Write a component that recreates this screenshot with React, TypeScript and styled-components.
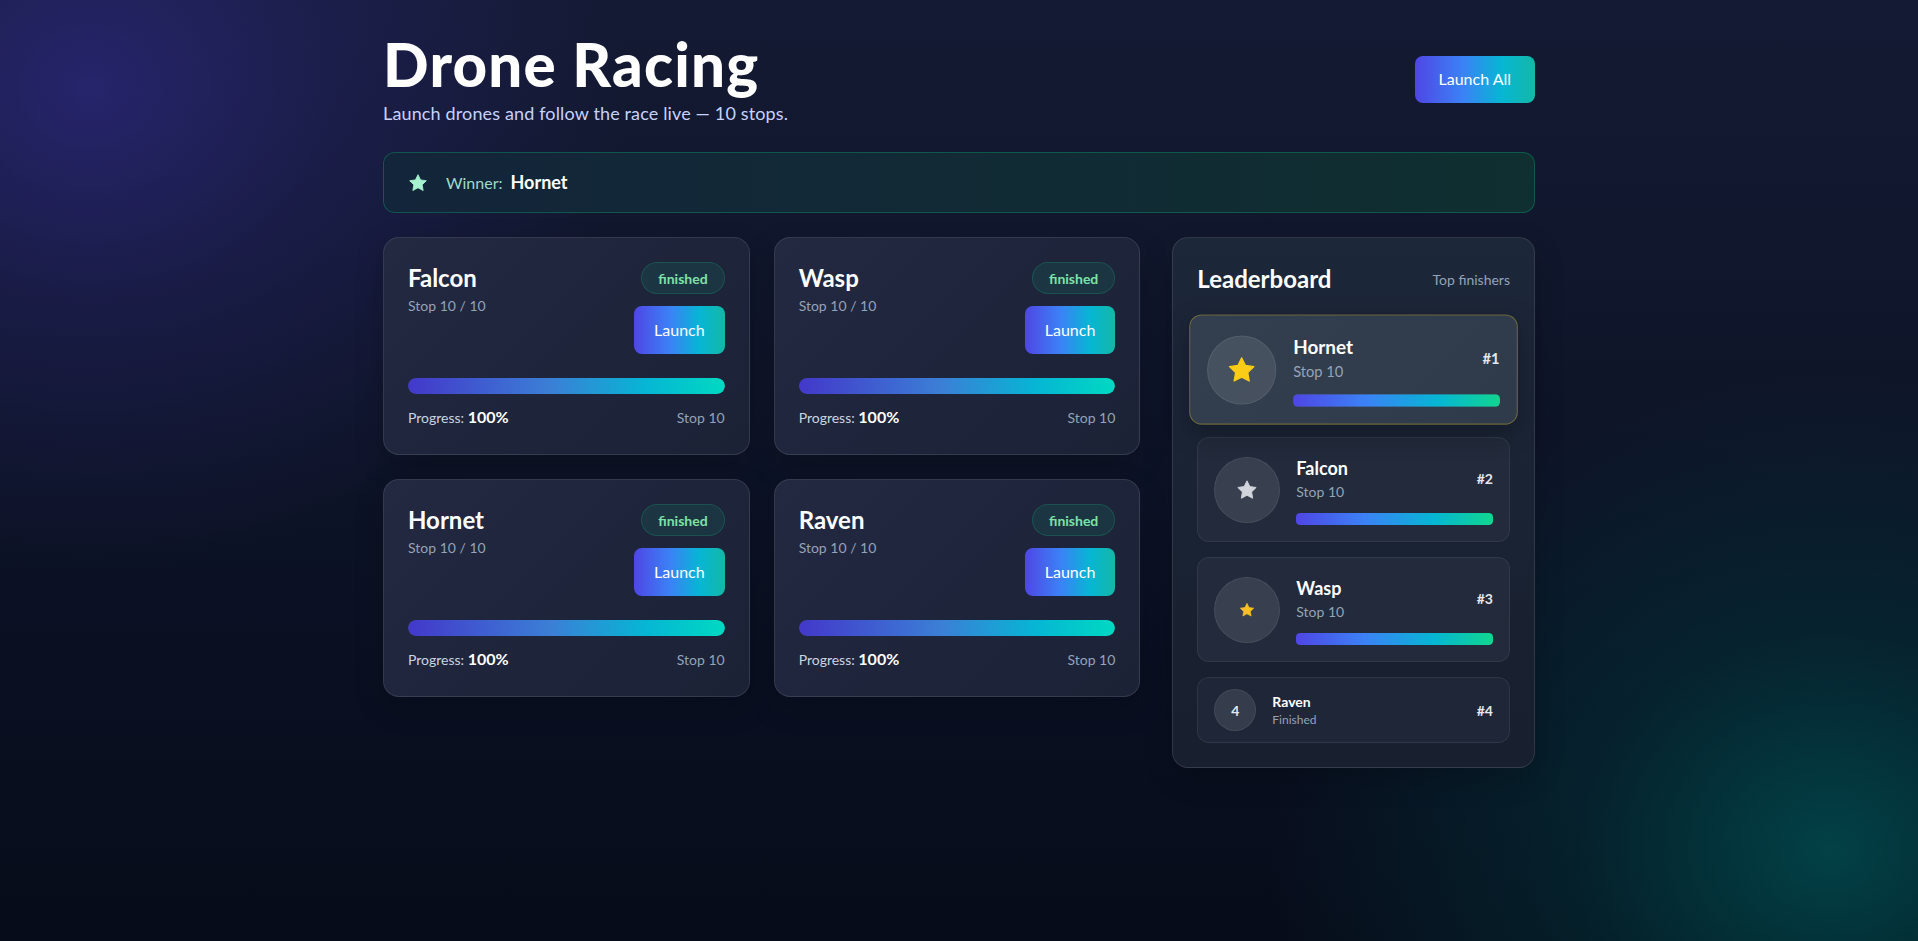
import React from "react";
import styled, { createGlobalStyle, css } from "styled-components";

const GlobalStyle = createGlobalStyle`
  * { box-sizing: border-box; }
  html, body { margin: 0; padding: 0; }
  body {
    min-height: 100vh;
    font-family: "Lato", "Noto Sans", "Liberation Sans", sans-serif;
    color: #f8fafc;
    background-color: #0a1022;
    background-image:
      radial-gradient(540px 480px at 90px 90px, rgba(52, 44, 150, 0.58) 0%, rgba(52, 44, 150, 0.24) 45%, rgba(52, 44, 150, 0) 100%),
      radial-gradient(560px 480px at 1830px 850px, rgba(0, 78, 80, 0.8) 0%, rgba(0, 64, 68, 0.38) 45%, rgba(0, 50, 60, 0) 100%),
      linear-gradient(180deg, #141a33 0%, #0f1529 40%, #0a1022 70%, #070c1a 100%);
    background-repeat: no-repeat;
  }
`;

const Page = styled.div`
  max-width: 1152px;
  margin: 0 auto;
  padding: 34px 0 40px;
`;

const Header = styled.header`
  display: flex;
  justify-content: space-between;
  align-items: center;
`;

const TitleBlock = styled.div`
  display: flex;
  flex-direction: column;
`;

const Title = styled.h1`
  margin: 0;
  font-size: 60px;
  line-height: 60px;
  font-weight: 900;
  letter-spacing: 0.02em;
  color: #ffffff;
`;

const Subtitle = styled.p`
  margin: 5px 0 0;
  font-size: 18px;
  line-height: 28px;
  letter-spacing: 0.008em;
  color: #c7d2fe;
`;

const GradientButton = styled.button<{ $size?: "md" | "lg" }>`
  border: none;
  cursor: pointer;
  font-family: inherit;
  color: #ffffff;
  font-size: 16px;
  line-height: 24px;
  border-radius: 8px;
  background: linear-gradient(90deg, #4f46e5 0%, #3b82f6 40%, #06b6d4 72%, #14b8a6 100%);
  ${(p) =>
    p.$size === "lg"
      ? css`
          padding: 11px 24px 12px;
          margin-top: -3px;
        `
      : css`
          padding: 12px 20px;
        `}
`;

const WinnerBanner = styled.div`
  margin-top: 25px;
  display: flex;
  align-items: center;
  gap: 18px;
  padding: 16px 24px;
  border-radius: 12px;
  border: 1px solid rgba(16, 185, 129, 0.32);
  background: linear-gradient(90deg, #13253a 0%, #112a35 50%, #0f2f30 100%);
`;

const WinnerText = styled.div`
  display: flex;
  align-items: baseline;
  gap: 8px;
  line-height: 27px;
`;

const WinnerLabel = styled.span`
  font-size: 16px;
  color: #9fdcc4;
`;

const WinnerName = styled.span`
  font-size: 18px;
  font-weight: 700;
  color: #ffffff;
`;

const MainGrid = styled.div`
  margin-top: 24px;
  display: grid;
  grid-template-columns: repeat(3, minmax(0, 1fr));
  gap: 32px;
  align-items: start;
`;

const CardsGrid = styled.div`
  grid-column: span 2;
  display: grid;
  grid-template-columns: repeat(2, minmax(0, 1fr));
  gap: 24px;
`;

const Card = styled.div`
  padding: 24px;
  border-radius: 16px;
  border: 1px solid rgba(255, 255, 255, 0.1);
  background: linear-gradient(135deg, #232941 0%, #1e243a 55%, #1c2236 100%);
  box-shadow: 0 10px 30px rgba(0, 0, 0, 0.18);
`;

const CardTop = styled.div`
  display: flex;
  justify-content: space-between;
  align-items: flex-start;
`;

const CardInfo = styled.div`
  display: flex;
  flex-direction: column;
`;

const CardName = styled.h3`
  margin: 0;
  font-size: 24px;
  line-height: 32px;
  font-weight: 700;
  color: #ffffff;
`;

const MutedText = styled.span<{ $size?: number }>`
  font-size: ${(p) => p.$size ?? 14}px;
  line-height: ${(p) => ((p.$size ?? 14) <= 12 ? 16 : 20)}px;
  color: #94a3b8;
`;

const CardStop = styled(MutedText)`
  margin-top: 2px;
`;

const CardActions = styled.div`
  display: flex;
  flex-direction: column;
  align-items: flex-end;
  gap: 12px;
`;

const Badge = styled.span`
  display: inline-flex;
  align-items: center;
  height: 32px;
  padding: 0 16px;
  border-radius: 999px;
  font-size: 14px;
  font-weight: 700;
  color: #7ee2a8;
  background: rgba(16, 185, 129, 0.12);
  border: 1px solid rgba(16, 185, 129, 0.22);
`;

const Track = styled.div<{ $height: number; $radius: number }>`
  width: 100%;
  height: ${(p) => p.$height}px;
  border-radius: ${(p) => p.$radius}px;
  background: rgba(255, 255, 255, 0.08);
  overflow: hidden;
`;

const Fill = styled.div<{ $variant: "card" | "board" }>`
  height: 100%;
  border-radius: inherit;
  background: ${(p) =>
    p.$variant === "card"
      ? "linear-gradient(90deg, #4338ca 0%, #3b7fd6 45%, #06b6d4 75%, #00d9c2 100%)"
      : "linear-gradient(90deg, #4f46e5 0%, #3b82f6 35%, #06b6d4 70%, #10d68f 100%)"};
`;

const CardBar = styled.div`
  margin-top: 24px;
`;

const CardFooter = styled.div`
  margin-top: 11px;
  display: flex;
  justify-content: space-between;
  align-items: center;
  line-height: 24px;
`;

const ProgressLabel = styled.span`
  font-size: 14px;
  color: #cbd5e1;
`;

const ProgressValue = styled.strong`
  font-size: 16px;
  font-weight: 700;
  color: #ffffff;
`;

const Panel = styled.aside`
  padding: 24px;
  border-radius: 16px;
  border: 1px solid rgba(255, 255, 255, 0.1);
  background: linear-gradient(180deg, #1c2739 0%, #1a2334 50%, #181f2e 100%);
  box-shadow: 0 10px 30px rgba(0, 0, 0, 0.2);
`;

const PanelHeader = styled.div`
  display: flex;
  justify-content: space-between;
  align-items: center;
  height: 34px;
  margin-bottom: 21px;
`;

const PanelTitle = styled.h2`
  margin: 0;
  font-size: 24px;
  line-height: 32px;
  font-weight: 700;
  color: #ffffff;
`;

const PanelHint = styled.span`
  font-size: 14px;
  color: #94a3b8;
`;

const RowList = styled.div`
  display: flex;
  flex-direction: column;
  gap: 15px;
`;

const Row = styled.div<{ $highlight?: boolean; $compact?: boolean }>`
  display: flex;
  align-items: center;
  gap: 16px;
  padding: ${(p) => (p.$compact ? "11px 16px" : "16px 16px")};
  border-radius: 12px;
  border: 1px solid rgba(255, 255, 255, 0.07);
  background: ${(p) => (p.$compact ? "#1f2637" : "#222a3b")};
  ${(p) =>
    p.$highlight &&
    css`
      transform: scale(1.05);
      background: linear-gradient(135deg, #333f4f 0%, #2f3a4a 100%);
      border-color: rgba(202, 170, 40, 0.4);
      box-shadow: 0 8px 24px rgba(0, 0, 0, 0.25);
    `}
`;

const Avatar = styled.div<{ $small?: boolean }>`
  flex: none;
  width: ${(p) => (p.$small ? 42 : 66)}px;
  height: ${(p) => (p.$small ? 42 : 66)}px;
  border-radius: 50%;
  display: flex;
  align-items: center;
  justify-content: center;
  background: rgba(255, 255, 255, 0.1);
  border: 1px solid rgba(255, 255, 255, 0.07);
  font-size: 14px;
  font-weight: 700;
  color: #e2e8f0;
`;

const RowBody = styled.div`
  flex: 1;
  min-width: 0;
  display: flex;
  flex-direction: column;
`;

const RowHead = styled.div`
  display: flex;
  justify-content: space-between;
  align-items: center;
`;

const RowText = styled.div`
  display: flex;
  flex-direction: column;
`;

const RowName = styled.span<{ $small?: boolean }>`
  font-size: ${(p) => (p.$small ? 14 : 18)}px;
  line-height: ${(p) => (p.$small ? 20 : 28)}px;
  font-weight: 700;
  color: #ffffff;
`;

const Rank = styled.span`
  font-size: 14px;
  font-weight: 700;
  color: #e2e8f0;
`;

const RowBar = styled.div`
  margin-top: 11px;
`;

const StarIcon = ({ size, color }: { size: number; color: string }) => (
  <svg width={size} height={size} viewBox="0 0 24 24" aria-hidden="true">
    <polygon
      points="12,2 15.09,8.26 22,9.27 17,14.14 18.18,21.02 12,17.77 5.82,21.02 7,14.14 2,9.27 8.91,8.26"
      fill={color}
      stroke={color}
      strokeWidth={1}
      strokeLinejoin="round"
    />
  </svg>
);

type Drone = { name: string; stop: number; total: number };

const drones: Drone[] = [
  { name: "Falcon", stop: 10, total: 10 },
  { name: "Wasp", stop: 10, total: 10 },
  { name: "Hornet", stop: 10, total: 10 },
  { name: "Raven", stop: 10, total: 10 },
];

type Finisher = { name: string; rank: number; star?: { size: number; color: string } };

const finishers: Finisher[] = [
  { name: "Hornet", rank: 1, star: { size: 28, color: "#facc15" } },
  { name: "Falcon", rank: 2, star: { size: 22, color: "#d1d5db" } },
  { name: "Wasp", rank: 3, star: { size: 16, color: "#fbbf24" } },
  { name: "Raven", rank: 4 },
];

const DroneCard = ({ drone }: { drone: Drone }) => {
  const pct = Math.round((drone.stop / drone.total) * 100);
  return (
    <Card>
      <CardTop>
        <CardInfo>
          <CardName>{drone.name}</CardName>
          <CardStop>
            Stop {drone.stop} / {drone.total}
          </CardStop>
        </CardInfo>
        <CardActions>
          <Badge>finished</Badge>
          <GradientButton>Launch</GradientButton>
        </CardActions>
      </CardTop>
      <CardBar>
        <Track $height={16} $radius={999}>
          <Fill $variant="card" style={{ width: `${pct}%` }} />
        </Track>
      </CardBar>
      <CardFooter>
        <span>
          <ProgressLabel>Progress: </ProgressLabel>
          <ProgressValue>{pct}%</ProgressValue>
        </span>
        <MutedText>Stop {drone.stop}</MutedText>
      </CardFooter>
    </Card>
  );
};

const LeaderRow = ({ f }: { f: Finisher }) => {
  if (!f.star) {
    return (
      <Row $compact>
        <Avatar $small>{f.rank}</Avatar>
        <RowBody>
          <RowHead>
            <RowText>
              <RowName $small>{f.name}</RowName>
              <MutedText $size={12}>Finished</MutedText>
            </RowText>
            <Rank>#{f.rank}</Rank>
          </RowHead>
        </RowBody>
      </Row>
    );
  }
  return (
    <Row $highlight={f.rank === 1}>
      <Avatar>
        <StarIcon size={f.star.size} color={f.star.color} />
      </Avatar>
      <RowBody>
        <RowHead>
          <RowText>
            <RowName>{f.name}</RowName>
            <MutedText>Stop 10</MutedText>
          </RowText>
          <Rank>#{f.rank}</Rank>
        </RowHead>
        <RowBar>
          <Track $height={12} $radius={4}>
            <Fill $variant="board" style={{ width: "100%" }} />
          </Track>
        </RowBar>
      </RowBody>
    </Row>
  );
};

export default function App() {
  return (
    <>
      <GlobalStyle />
      <Page>
        <Header>
          <TitleBlock>
            <Title>Drone Racing</Title>
            <Subtitle>Launch drones and follow the race live — 10 stops.</Subtitle>
          </TitleBlock>
          <GradientButton $size="lg">Launch All</GradientButton>
        </Header>

        <WinnerBanner>
          <StarIcon size={20} color="#a7f3d0" />
          <WinnerText>
            <WinnerLabel>Winner:</WinnerLabel>
            <WinnerName>Hornet</WinnerName>
          </WinnerText>
        </WinnerBanner>

        <MainGrid>
          <CardsGrid>
            {drones.map((d) => (
              <DroneCard key={d.name} drone={d} />
            ))}
          </CardsGrid>
          <Panel>
            <PanelHeader>
              <PanelTitle>Leaderboard</PanelTitle>
              <PanelHint>Top finishers</PanelHint>
            </PanelHeader>
            <RowList>
              {finishers.map((f) => (
                <LeaderRow key={f.name} f={f} />
              ))}
            </RowList>
          </Panel>
        </MainGrid>
      </Page>
    </>
  );
}
